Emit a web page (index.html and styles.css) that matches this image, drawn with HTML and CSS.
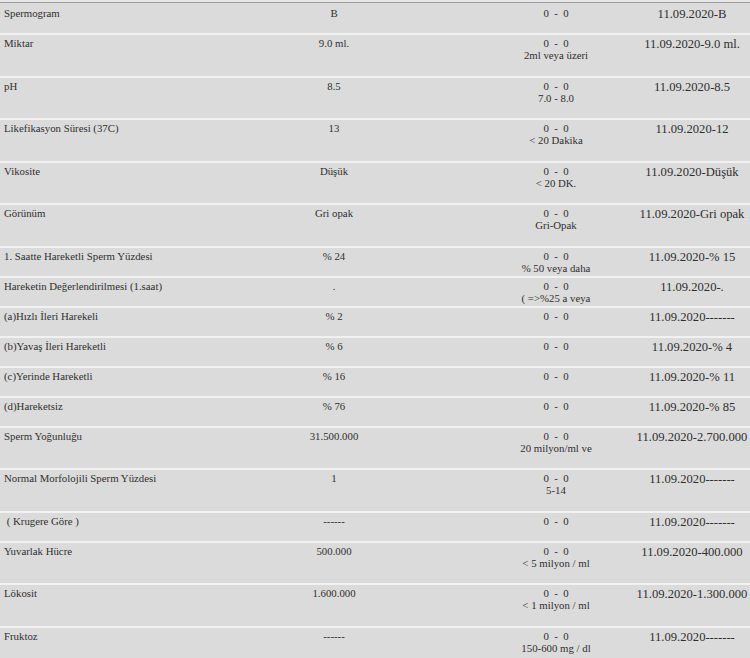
FILE: index.html
```html
<!DOCTYPE html>
<html lang="tr">
<head>
<meta charset="utf-8">
<title>Spermogram</title>
<link rel="stylesheet" href="styles.css">
</head>
<body>
<div class="sheet">
  <div class="row first short"><div class="c name">Spermogram</div><div class="c val">B</div><div class="c ref"><span>0&nbsp; -&nbsp; 0</span></div><div class="c hist">11.09.2020-B</div></div>
  <div class="row tall"><div class="c name">Miktar</div><div class="c val">9.0 ml.</div><div class="c ref"><span>0&nbsp; -&nbsp; 0</span><span>2ml veya üzeri</span></div><div class="c hist">11.09.2020-9.0 ml.</div></div>
  <div class="row tall"><div class="c name">pH</div><div class="c val">8.5</div><div class="c ref"><span>0&nbsp; -&nbsp; 0</span><span>7.0 - 8.0</span></div><div class="c hist">11.09.2020-8.5</div></div>
  <div class="row tall"><div class="c name">Likefikasyon Süresi (37C)</div><div class="c val">13</div><div class="c ref"><span>0&nbsp; -&nbsp; 0</span><span>&lt; 20 Dakika</span></div><div class="c hist">11.09.2020-12</div></div>
  <div class="row tall"><div class="c name">Vikosite</div><div class="c val">Düşük</div><div class="c ref"><span>0&nbsp; -&nbsp; 0</span><span>&lt; 20 DK.</span></div><div class="c hist">11.09.2020-Düşük</div></div>
  <div class="row tall"><div class="c name">Görünüm</div><div class="c val">Gri opak</div><div class="c ref"><span>0&nbsp; -&nbsp; 0</span><span>Gri-Opak</span></div><div class="c hist">11.09.2020-Gri opak</div></div>
  <div class="row short"><div class="c name">1. Saatte Hareketli Sperm Yüzdesi</div><div class="c val">% 24</div><div class="c ref"><span>0&nbsp; -&nbsp; 0</span><span>% 50 veya daha</span></div><div class="c hist">11.09.2020-% 15</div></div>
  <div class="row short"><div class="c name">Hareketin Değerlendirilmesi (1.saat)</div><div class="c val">.</div><div class="c ref"><span>0&nbsp; -&nbsp; 0</span><span>( =&gt;%25 a veya</span></div><div class="c hist">11.09.2020-.</div></div>
  <div class="row short"><div class="c name">(a)Hızlı İleri Harekeli</div><div class="c val">% 2</div><div class="c ref"><span>0&nbsp; -&nbsp; 0</span></div><div class="c hist">11.09.2020-------</div></div>
  <div class="row short"><div class="c name">(b)Yavaş İleri Hareketli</div><div class="c val">% 6</div><div class="c ref"><span>0&nbsp; -&nbsp; 0</span></div><div class="c hist">11.09.2020-% 4</div></div>
  <div class="row short"><div class="c name">(c)Yerinde Hareketli</div><div class="c val">% 16</div><div class="c ref"><span>0&nbsp; -&nbsp; 0</span></div><div class="c hist">11.09.2020-% 11</div></div>
  <div class="row short"><div class="c name">(d)Hareketsiz</div><div class="c val">% 76</div><div class="c ref"><span>0&nbsp; -&nbsp; 0</span></div><div class="c hist">11.09.2020-% 85</div></div>
  <div class="row tall"><div class="c name">Sperm Yoğunluğu</div><div class="c val">31.500.000</div><div class="c ref"><span>0&nbsp; -&nbsp; 0</span><span>20 milyon/ml ve</span></div><div class="c hist">11.09.2020-2.700.000</div></div>
  <div class="row tall"><div class="c name">Normal Morfolojili Sperm Yüzdesi</div><div class="c val">1</div><div class="c ref"><span>0&nbsp; -&nbsp; 0</span><span>5-14</span></div><div class="c hist">11.09.2020-------</div></div>
  <div class="row short"><div class="c name">&nbsp;( Krugere Göre )</div><div class="c val">------</div><div class="c ref"><span>0&nbsp; -&nbsp; 0</span></div><div class="c hist">11.09.2020-------</div></div>
  <div class="row tall"><div class="c name">Yuvarlak Hücre</div><div class="c val">500.000</div><div class="c ref"><span>0&nbsp; -&nbsp; 0</span><span>&lt; 5 milyon / ml</span></div><div class="c hist">11.09.2020-400.000</div></div>
  <div class="row tall"><div class="c name">Lökosit</div><div class="c val">1.600.000</div><div class="c ref"><span>0&nbsp; -&nbsp; 0</span><span>&lt; 1 milyon / ml</span></div><div class="c hist">11.09.2020-1.300.000</div></div>
  <div class="row tall"><div class="c name">Fruktoz</div><div class="c val">------</div><div class="c ref"><span>0&nbsp; -&nbsp; 0</span><span>150-600 mg / dl</span></div><div class="c hist">11.09.2020-------</div></div>
</div>
</body>
</html>
```

FILE: styles.css
```css
html, body {
  margin: 0;
  padding: 0;
  overflow: hidden;
  background: #e6e6e6;
}

body {
  font-family: "Liberation Serif", "Times New Roman", serif;
  color: #2f2f2f;
  width: 750px;
  height: 658px;
}

.sheet {
  margin-top: 2px;
  width: 760px;
  border-top: 1px solid #9e9e9e;
  background: #dbdbdb;
}

.row {
  display: grid;
  grid-template-columns: 180px 308px 136px 136px;
  align-items: start;
  box-sizing: border-box;
  border-top: 2px solid #f1f1f1;
}

.row.first {
  border-top: 0;
  padding-top: 2px;
}

.row.short { height: 30px; }
.row.tall { height: 42.5px; }

.c {
  padding-top: 2px;
  font-size: 10.8px;
  line-height: 12px;
  white-space: nowrap;
}

.name {
  padding-left: 4px;
}

.val {
  text-align: center;
}

.ref {
  display: flex;
  flex-direction: column;
  align-items: center;
}

.hist {
  display: flex;
  justify-content: center;
  font-size: 12.6px;
  line-height: 14px;
}
```
